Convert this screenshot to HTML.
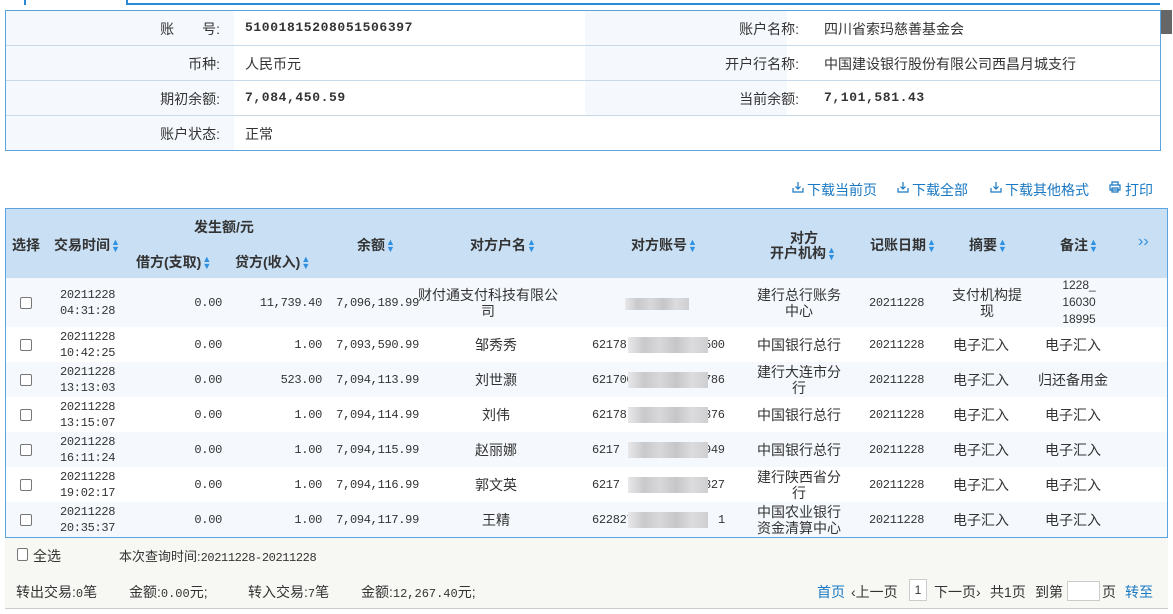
<!DOCTYPE html>
<html><head><meta charset="utf-8"><style>
*{margin:0;padding:0;box-sizing:border-box}
body{width:1173px;height:614px;background:#fff;position:relative;overflow:hidden;font-family:"Liberation Sans","Noto Sans CJK SC",sans-serif;font-size:14px;color:#333}
.a{position:absolute;white-space:nowrap}
.m{font-family:"Liberation Mono","Noto Sans CJK SC",monospace}
.lk{color:#1a78c2}
.hd{font-weight:bold;color:#333}
.ar{color:#2f8fe0;font-size:9px;line-height:7px;display:inline-block;vertical-align:middle;width:7px;margin-left:1px}
.cb{position:absolute;width:12px;height:12px;border:1px solid #777;border-radius:2px;background:#fff}
.blur{position:absolute;background:linear-gradient(90deg,#e8e8ea,#c9c9cc 20%,#d8d8da 40%,#c6c6c9 60%,#dcdcde 80%,#cfcfd2);}
svg.i{position:absolute}
</style></head><body>
<!-- tabs -->
<div class="a" style="left:24px;top:0;width:2px;height:5px;background:#2a8ad6"></div>
<div class="a" style="left:126px;top:0;width:2px;height:5px;background:#2a8ad6"></div>
<div class="a" style="left:126px;top:3px;width:1034px;height:2px;background:#2a8ad6"></div>
<div class="a" style="left:1160px;top:10px;width:12px;height:24px;background:#666"></div>
<!-- info table -->
<div class="a" style="left:5px;top:10px;width:1156px;height:141px;border:1px solid #5aa5e0"></div>
<div class="a" style="left:6px;top:11px;width:228px;height:139px;background:#f5f9fd"></div>
<div class="a" style="left:585px;top:11px;width:202px;height:104px;background:#f5f9fd"></div>
<div class="a" style="left:6px;top:45px;width:1154px;height:1px;background:#c8d9ea"></div>
<div class="a" style="left:6px;top:80px;width:1154px;height:1px;background:#c8d9ea"></div>
<div class="a" style="left:6px;top:115px;width:1154px;height:1px;background:#c8d9ea"></div>
<div class="a" style="right:953px;top:19px">账　　号:</div>
<div class="a" style="right:953px;top:54px">币种:</div>
<div class="a" style="right:953px;top:89px">期初余额:</div>
<div class="a" style="right:953px;top:124px">账户状态:</div>
<div class="a m" style="left:245px;top:20px;font-size:13px;font-weight:bold;letter-spacing:0.6px">51001815208051506397</div>
<div class="a" style="left:245px;top:54px">人民币元</div>
<div class="a m" style="left:245px;top:90px;font-size:13px;font-weight:bold;letter-spacing:0.6px">7,084,450.59</div>
<div class="a" style="left:245px;top:124px">正常</div>
<div class="a" style="right:374px;top:19px">账户名称:</div>
<div class="a" style="right:374px;top:54px">开户行名称:</div>
<div class="a" style="right:374px;top:89px">当前余额:</div>
<div class="a" style="left:824px;top:19px">四川省索玛慈善基金会</div>
<div class="a" style="left:824px;top:54px">中国建设银行股份有限公司西昌月城支行</div>
<div class="a m" style="left:824px;top:90px;font-size:13px;font-weight:bold;letter-spacing:0.6px">7,101,581.43</div>
<div id="tb"></div>
<!-- table -->
<div class="a" style="left:5px;top:208px;width:1163px;height:330px;border:1px solid #5aa5e0;border-bottom:none"></div>
<div class="a" style="left:6px;top:209px;width:1161px;height:69px;background:#c8dff4"></div>
<div class="a hd" style="left:12px;top:235px">选择</div>
<div class="a hd" style="left:54px;top:235px">交易时间<span class="ar">▲<br>▼</span></div>
<div class="a hd" style="left:194px;top:217px">发生额/元</div>
<div class="a hd" style="left:136px;top:252px">借方(支取)<span class="ar">▲<br>▼</span></div>
<div class="a hd" style="left:235px;top:252px">贷方(收入)<span class="ar">▲<br>▼</span></div>
<div class="a hd" style="left:357px;top:235px">余额<span class="ar">▲<br>▼</span></div>
<div class="a hd" style="left:470px;top:235px">对方户名<span class="ar">▲<br>▼</span></div>
<div class="a hd" style="left:631px;top:235px">对方账号<span class="ar">▲<br>▼</span></div>
<div class="a hd" style="left:790px;top:228px">对方</div>
<div class="a hd" style="left:770px;top:243px">开户机构<span class="ar">▲<br>▼</span></div>
<div class="a hd" style="left:870px;top:235px">记账日期<span class="ar">▲<br>▼</span></div>
<div class="a hd" style="left:969px;top:235px">摘要<span class="ar">▲<br>▼</span></div>
<div class="a hd" style="left:1060px;top:235px">备注<span class="ar">▲<br>▼</span></div>
<div class="a" style="left:1138px;top:233px;color:#2f8fe0;font-size:16px">››</div>
<div id="rows"></div>
<script>
var R=[["04:31:28","11,739.40","7,096,189.99","财付通支付科技有限公|司","","","建行总行账务|中心","支付机构提|现","1228_|16030|18995"],
["10:42:25","1.00","7,093,590.99","邹秀秀","62178","500","中国银行总行","电子汇入","电子汇入"],
["13:13:03","523.00","7,094,113.99","刘世灏","621700","786","建行大连市分|行","电子汇入","归还备用金"],
["13:15:07","1.00","7,094,114.99","刘伟","62178","376","中国银行总行","电子汇入","电子汇入"],
["16:11:24","1.00","7,094,115.99","赵丽娜","6217","949","中国银行总行","电子汇入","电子汇入"],
["19:02:17","1.00","7,094,116.99","郭文英","6217","327","建行陕西省分|行","电子汇入","电子汇入"],
["20:35:37","1.00","7,094,117.99","王精","622827","1","中国农业银行|资金清算中心","电子汇入","电子汇入"]];
var h="",y=278;
function ml(t,cx,cy,lh,fs){var p=t.split("|");var s="";var top=cy-p.length*lh/2;p.forEach(function(q,i){s+='<div class="a" style="left:'+(cx-100)+'px;width:200px;text-align:center;top:'+(top+i*lh)+'px;line-height:'+lh+'px;font-size:'+fs+'px">'+q+'</div>';});return s;}
R.forEach(function(r,i){var H=i==0?49:35;var cy=y+H/2;
h+='<div class="a" style="left:6px;top:'+y+'px;width:1161px;height:'+H+'px;background:'+(i%2==0?'#f5f9fd':'#fff')+'"></div>';
h+='<div class="cb" style="left:20px;top:'+(cy-6)+'px"></div>';
h+='<div class="a m" style="left:60px;top:'+(cy-16)+'px;font-size:12px;line-height:16px;letter-spacing:-0.3px">20211228<br>'+r[0]+'</div>';
var nm='class="a m" style="font-size:12px;letter-spacing:-0.3px;top:'+(cy-7)+'px;';
h+='<div '+nm+'right:951px">0.00</div>';
h+='<div '+nm+'right:851px">'+r[1]+'</div>';
h+='<div '+nm+'right:754px">'+r[2]+'</div>';
h+=ml(r[3],i==0?488:496,cy,16,14);
if(r[4]){h+='<div '+nm+'left:592px">'+r[4]+'</div><div '+nm+'left:'+(725-r[5].length*7)+'px">'+r[5]+'</div>';
h+='<div class="blur" style="left:628px;top:'+(cy-8)+'px;width:80px;height:16px"></div>';}
else h+='<div class="blur" style="left:625px;top:'+(cy-5)+'px;width:64px;height:12px"></div>';
h+=ml(r[6],799,cy,16,14);
h+='<div class="a m" style="left:869px;top:'+(cy-7)+'px;font-size:12px;letter-spacing:-0.3px">20211228</div>';
h+=ml(r[7],i==0?987:981,cy,16,14);
h+=ml(r[8],i==0?1079:1073,cy,i==0?17:16,i==0?12:14);
y+=H;});
document.getElementById("rows").innerHTML=h;
var dl='<svg class="i" width="12" height="12" viewBox="0 0 12 12" style="left:XPX;top:YPX" fill="none" stroke="#1a78c2" stroke-width="1.2"><path d="M6 1v7M3.5 5.5L6 8l2.5-2.5M1 7v4h10V7"/></svg>';
var pr='<svg class="i" width="12" height="12" viewBox="0 0 12 12" style="left:XPX;top:YPX" fill="none" stroke="#1a78c2" stroke-width="1.2"><path d="M3 4V1h6v3M1 4h10v5H1zM3 7h6v4H3z"/></svg>';
var t="";[[180,187],[548,555]].forEach(function(p){var ty=p[0],iy=p[1]-6;
[[792,807,"下载当前页"],[897,912,"下载全部"],[990,1005,"下载其他格式"]].forEach(function(d){t+=dl.replace("XPX",d[0]+"px").replace("YPX",iy+"px")+'<div class="a lk" style="left:'+d[1]+'px;top:'+ty+'px">'+d[2]+'</div>';});
t+=pr.replace("XPX","1109px").replace("YPX",iy+"px")+'<div class="a lk" style="left:1125px;top:'+ty+'px">打印</div>';});
document.getElementById("tb").innerHTML=t;
</script>
<!-- footer -->
<div class="a" style="left:5px;top:537px;width:1163px;height:72px;background:#f7f8f4;border-top:1px solid #5aa5e0;border-bottom:1px solid #ccc"></div>
<div class="cb" style="left:17px;top:548px;width:11px;height:13px"></div>
<div class="a" style="left:33px;top:546px">全选</div>
<div class="a" style="left:119px;top:546px;font-size:13px">本次查询时间:<span class="m" style="font-size:12px;letter-spacing:-0.4px">20211228-20211228</span></div>
<div id="ft"></div>
<div class="a" style="left:16px;top:582px">转出交易:<span class="m" style="font-size:12px">0</span>笔</div>
<div class="a" style="left:129px;top:582px">金额:<span class="m" style="font-size:12px">0.00</span>元;</div>
<div class="a" style="left:248px;top:582px">转入交易:<span class="m" style="font-size:12px">7</span>笔</div>
<div class="a" style="left:361px;top:582px">金额:<span class="m" style="font-size:12px">12,267.40</span>元;</div>
<div class="a lk" style="left:817px;top:582px">首页</div>
<div class="a" style="left:851px;top:582px">‹上一页</div>
<div class="a" style="left:909px;top:579px;width:18px;height:22px;border:1px solid #ccc;background:#fff;font-size:12px;text-align:center;line-height:20px">1</div>
<div class="a" style="left:934px;top:582px">下一页›</div>
<div class="a" style="left:990px;top:582px">共1页</div>
<div class="a" style="left:1035px;top:582px">到第</div>
<div class="a" style="left:1067px;top:581px;width:33px;height:20px;border:1px solid #ccc;background:#fff"></div>
<div class="a" style="left:1102px;top:582px">页</div>
<div class="a lk" style="left:1125px;top:582px">转至</div>
</body></html>
